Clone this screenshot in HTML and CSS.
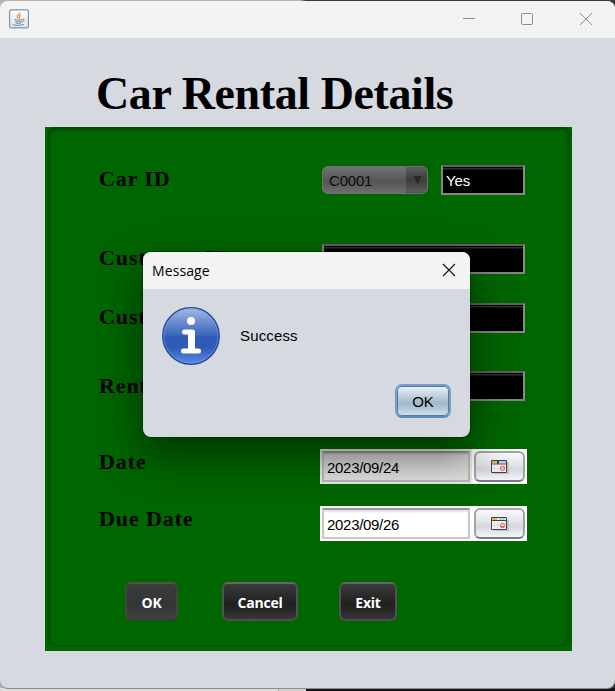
FILE: index.html
```html
<!DOCTYPE html>
<html lang="en">
<head>
<meta charset="utf-8">
<title>Car Rental Details</title>
<link rel="stylesheet" href="styles.css">
</head>
<body>
<div class="window">
  <header class="titlebar">
    <svg class="java" width="20" height="20" viewBox="0 0 20 20">
      <defs><linearGradient id="jb" x1="0" y1="0" x2="0" y2="1"><stop offset="0" stop-color="#fff"/><stop offset="1" stop-color="#dce3ea"/></linearGradient></defs>
      <rect x=".6" y=".9" width="18.8" height="18" rx="1.5" fill="url(#jb)" stroke="#8495a5" stroke-width="1.2"/>
      <path d="M10.900 3.500c.6 2-3.500 2.500-2.600 4.200.3.800 1 1.200 1.100 1.800M12 6c-2.600 1.200-.6 2-1.500 3.500" fill="none" stroke="#ed8b3d" stroke-width="1.300"/>
      <path d="M5.500 10.500c2 .7 6 .6 8 0M6.200 12.300c2 .7 4.800.7 6.800 0M6.700 13.900c2 .6 4 .6 5.600 0M13.500 10.200c2.500-.4 2 2-.4 2.400M4 15.200c-.8 1.300 8.500 1.600 11 0" fill="none" stroke="#6d899d" stroke-width="1"/>
    </svg>
    <svg class="controls" width="132" height="14" viewBox="0 0 132 14" fill="none" stroke="#8c8c8c">
      <path d="M1 6.500h12"/>
      <rect x="59.500" y="1.500" width="11" height="11" rx="1"/>
      <path d="M118 1l12 12M130 1l-12 12"/>
    </svg>
  </header>
  <h1 class="title">Car Rental Details</h1>
  <main class="panel">
    <div class="form">
      <span class="label">Car ID</span>
      <div class="pair">
        <div class="combo"><span class="value">C0001</span><span class="arrow"><svg width="9" height="9" viewBox="0 0 9 9"><path d="M.5 0h8l-4 8.500z" fill="#272727"/></svg></span></div>
        <div class="field short">Yes</div>
      </div>
      <span class="label">Customer ID</span><div class="field"></div>
      <span class="label">Customer Name</span><div class="field"></div>
      <span class="label rent">Rental Fee</span><div class="field"></div>
      <span class="label high">Date</span>
      <div class="date"><span class="day gray">2023/09/24</span><span class="pick">
        <svg width="19" height="15" viewBox="0 0 19 15"><path d="M3 2h15v12H3z" fill="#c3c3c8"/><path d="M.5.5h15v12H.5z" fill="#f4f4f4" stroke="#414141"/><path d="M1 1h5v2.500H1z" fill="#e9b447"/><path d="M6 1h2v3H6z" fill="#444"/><path d="M8 1h7v2.500H8z" fill="#b0d3f3"/><path d="M1 4h14" stroke="#555"/><path d="M3.500 5v7M6.500 5v7M1 8.500h8" stroke="#ddd"/><circle cx="11.500" cy="8.300" r="2.300" fill="#f7d7d9" stroke="#df5d64"/><path d="M10.500 8.300h2" stroke="#df5d64"/></svg>
      </span></div>
      <span class="label high">Due Date</span>
      <div class="date"><span class="day">2023/09/26</span><span class="pick">
        <svg width="19" height="15" viewBox="0 0 19 15"><path d="M3 3h15v11H3z" fill="#c3c3c8"/><path d="M.5.5h15v12H.5z" fill="#f4f4f4" stroke="#414141"/><path d="M1 3.500h14" stroke="#414141"/><path d="M1 1h5v2H1z" fill="#e9b447"/><path d="M8 1h6v2H8z" fill="#b0d3f3"/><path d="M3.500 5v7M6.500 5v7M1 8.500h8" stroke="#ddd"/><circle cx="11.500" cy="8.500" r="2.200" fill="#f7d7d9" stroke="#df5d64"/><path d="M10 9.500h3" stroke="#df4d56"/></svg>
      </span></div>
    </div>
    <div class="actions">
      <button class="dark ok">OK</button>
      <button class="dark cancel">Cancel</button>
      <button class="dark exit">Exit</button>
    </div>
  </main>
</div>
<section class="dialog">
  <header class="dialog-bar"><span>Message</span>
    <svg width="14" height="14" viewBox="0 0 14 14" stroke="#111" stroke-width="1.100"><path d="M1 1l12 12M13 1L1 13"/></svg>
  </header>
  <div class="dialog-body">
    <svg width="58" height="58" viewBox="0 0 58 58">
      <defs><linearGradient id="ib" x1="0" y1="0" x2="0" y2="1"><stop offset="0" stop-color="#a3b9e4"/><stop offset=".48" stop-color="#3a66bb"/><stop offset=".52" stop-color="#2e5bb5"/><stop offset=".7" stop-color="#2d5bb7"/><stop offset="1" stop-color="#5a8ae8"/></linearGradient></defs>
      <circle cx="29" cy="29" r="28.300" fill="url(#ib)" stroke="#1f4795" stroke-width="1.200"/>
      <circle cx="29" cy="29" r="27" fill="none" stroke="#7fa0e0" stroke-opacity=".5"/>
      <circle cx="29" cy="14" r="4" fill="#fff"/>
      <path d="M22.500 25h8v18M21.500 44h15" fill="none" stroke="#fff" stroke-width="5" stroke-linecap="round" stroke-linejoin="round"/>
      <path d="M26 23h5a2 2 0 0 1 2 2v19h-7z" fill="#fff"/>
    </svg>
    <span class="message">Success</span>
  </div>
  <div class="dialog-actions"><button class="confirm">OK</button></div>
</section>
</body>
</html>
```

FILE: styles.css
```css
* { box-sizing: border-box; }
html { overflow: hidden; }
body {
  margin: 0;
  width: 615px;
  height: 691px;
  overflow: hidden;
  position: relative;
  padding-top: 1px;
  background: linear-gradient(90deg, #dedede 0 278px, #aaa 278px 279px, #d0d0d0 279px 306px, #17151a 306px) 0 688px / 100% 3px no-repeat,
    linear-gradient(90deg, #b5b5b5 0 300px, #3b383d 306px);
  font-family: "Liberation Sans", sans-serif;
}
button { font: inherit; padding: 0; }
svg { display: block; }
.window {
  height: 687px;
  background: #d6d9e0;
  border-radius: 8px;
  overflow: hidden;
  box-shadow: 0 1px 0 #8e8e90;
}
.titlebar {
  height: 37px;
  background: #f3f3f3;
  display: flex;
  justify-content: space-between;
  align-items: center;
  padding: 0 21px 2px 9px;
}
.title {
  margin: 0 0 0 96px;
  height: 89px;
  font: bold 46px/111px "Liberation Serif", serif;
  letter-spacing: -0.4px;
  white-space: nowrap;
}
.panel {
  margin-left: 45px;
  width: 527px;
  height: 524px;
  padding: 38px 45px 0 54px;
  background: #060;
  position: relative;
}
.panel::before {
  content: "";
  position: absolute;
  inset: 0 1px 4px 2px;
  border-radius: 8px;
  border: 1px solid #005900;
  border-top-color: #004c00;
  box-shadow: inset 0 2px 3px #004a00, inset 2px 0 2px #005600, inset -2px 0 3px #005000;
}
.form {
  display: grid;
  grid-template-columns: 221px 207px;
  grid-template-rows: 79px 59px 68px 78px 57px 35px;
  position: relative;
}
.label {
  font: bold 22px/27px "Liberation Serif", serif;
  letter-spacing: 0.9px;
  white-space: nowrap;
}
.rent { line-height: 29px; }
.high { line-height: 25px; }
.pair { display: flex; gap: 13px; }
.field {
  height: 30px;
  width: 203px;
  margin-left: 2px;
  border: 2px solid #858585;
  border-color: #626262 #8a8a8a #858585 #858585;
  background: linear-gradient(#000 0 1px, #303030 1px 2px, #000 3px);
  color: #fff;
  font-size: 15px;
  line-height: 28px;
  letter-spacing: -0.1px;
  padding-left: 3px;
}
.short { width: 84px; margin: 0; }
.combo {
  width: 106px;
  height: 28px;
  margin: 1px 0 0 2px;
  display: flex;
  border: 1px solid #717171;
  border-radius: 6px;
  overflow: hidden;
  font-size: 15px;
  line-height: 27px;
  letter-spacing: -0.2px;
  background: linear-gradient(#727272, #5b5b5b 45%, #555 55%, #6e6e6e);
}
.value { flex: 1; padding-left: 6px; color: #0c0c0c; }
.arrow {
  width: 21px;
  padding: 9px 0 0 7px;
  background: linear-gradient(#5c5c5c, #404040 45%, #3e3e3e 55%, #5b5b5b);
  border-bottom: 1px solid #405463;
}
.date {
  display: flex;
  width: 207px;
  height: 35px;
  padding: 2px;
  gap: 4px;
  background: #fff;
}
.day {
  width: 148px;
  height: 31px;
  border: 2px solid #c8c8c8;
  border-top-color: #949494;
  padding-left: 3px;
  font-size: 15px;
  line-height: 29px;
  letter-spacing: -0.3px;
  box-shadow: inset 0 2px 2px #e4e4e4;
}
.gray {
  border-color: #949494 #bababa #bababa;
  background: linear-gradient(#d1d1d1, #e2e2e2);
  box-shadow: inset 0 2px 1px #c2c2c2, 0 0 0 2px #e8e8e8;
}
.pick {
  width: 51px;
  height: 31px;
  border: 2px solid #a1a4a9;
  border-bottom-color: #777b82;
  border-radius: 6px;
  background: linear-gradient(#fafafb, #e2e3e8 45%, #d4d7df 60%, #f4f5f9);
  padding: 7px 0 0 15px;
}
.actions { display: flex; position: relative; margin: 41px 0 0 26px; }
.dark {
  height: 39px;
  border: 2px solid #484848;
  border-color: #656865 #505350 #4b4e4b;
  border-radius: 6px;
  background: linear-gradient(#3b3b3b, #202020 55%, #222 65%, #383838);
  color: #fff;
  font: bold 14px/37px "Open Sans", sans-serif;
  letter-spacing: -0.2px;
}
.ok {
  width: 53px;
  border-color: #4d554d #3c4a3c #304230;
  background: linear-gradient(#3c3c3c, #343434 60%, #424242);
}
.cancel { width: 76px; margin-left: 44px; }
.exit { width: 58px; margin-left: 41px; }
.dialog {
  position: absolute;
  left: 143px;
  top: 252px;
  width: 327px;
  height: 185px;
  border-radius: 8px;
  background: #d6d9e0;
  box-shadow: 0 0 1px 1px rgba(0, 0, 0, .25), 0 17px 42px 4px rgba(0, 0, 0, .44);
}
.dialog-bar {
  height: 37px;
  border-radius: 8px 8px 0 0;
  background: #f3f3f3;
  display: flex;
  align-items: center;
  justify-content: space-between;
  padding: 0 14px 1px 9px;
  font: 14px "Open Sans", sans-serif;
  letter-spacing: 0.1px;
}
.dialog-body {
  display: flex;
  align-items: center;
  gap: 20px;
  padding: 18px 0 0 19px;
  font-size: 15px;
}
.message { padding-bottom: 2px; letter-spacing: 0.15px; }
.dialog-actions {
  display: flex;
  justify-content: flex-end;
  padding: 19px 19px 0 0;
}
.confirm {
  width: 56px;
  height: 34px;
  border: 2px solid #72a0ca;
  border-bottom-color: #5f8cb5;
  border-radius: 7px;
  box-shadow: inset 0 0 0 1px #53799c;
  background: linear-gradient(#eef3f7, #aabfd0 50%, #a2b9cd 60%, #d2e1ed);
  font-size: 15px;
}
```
